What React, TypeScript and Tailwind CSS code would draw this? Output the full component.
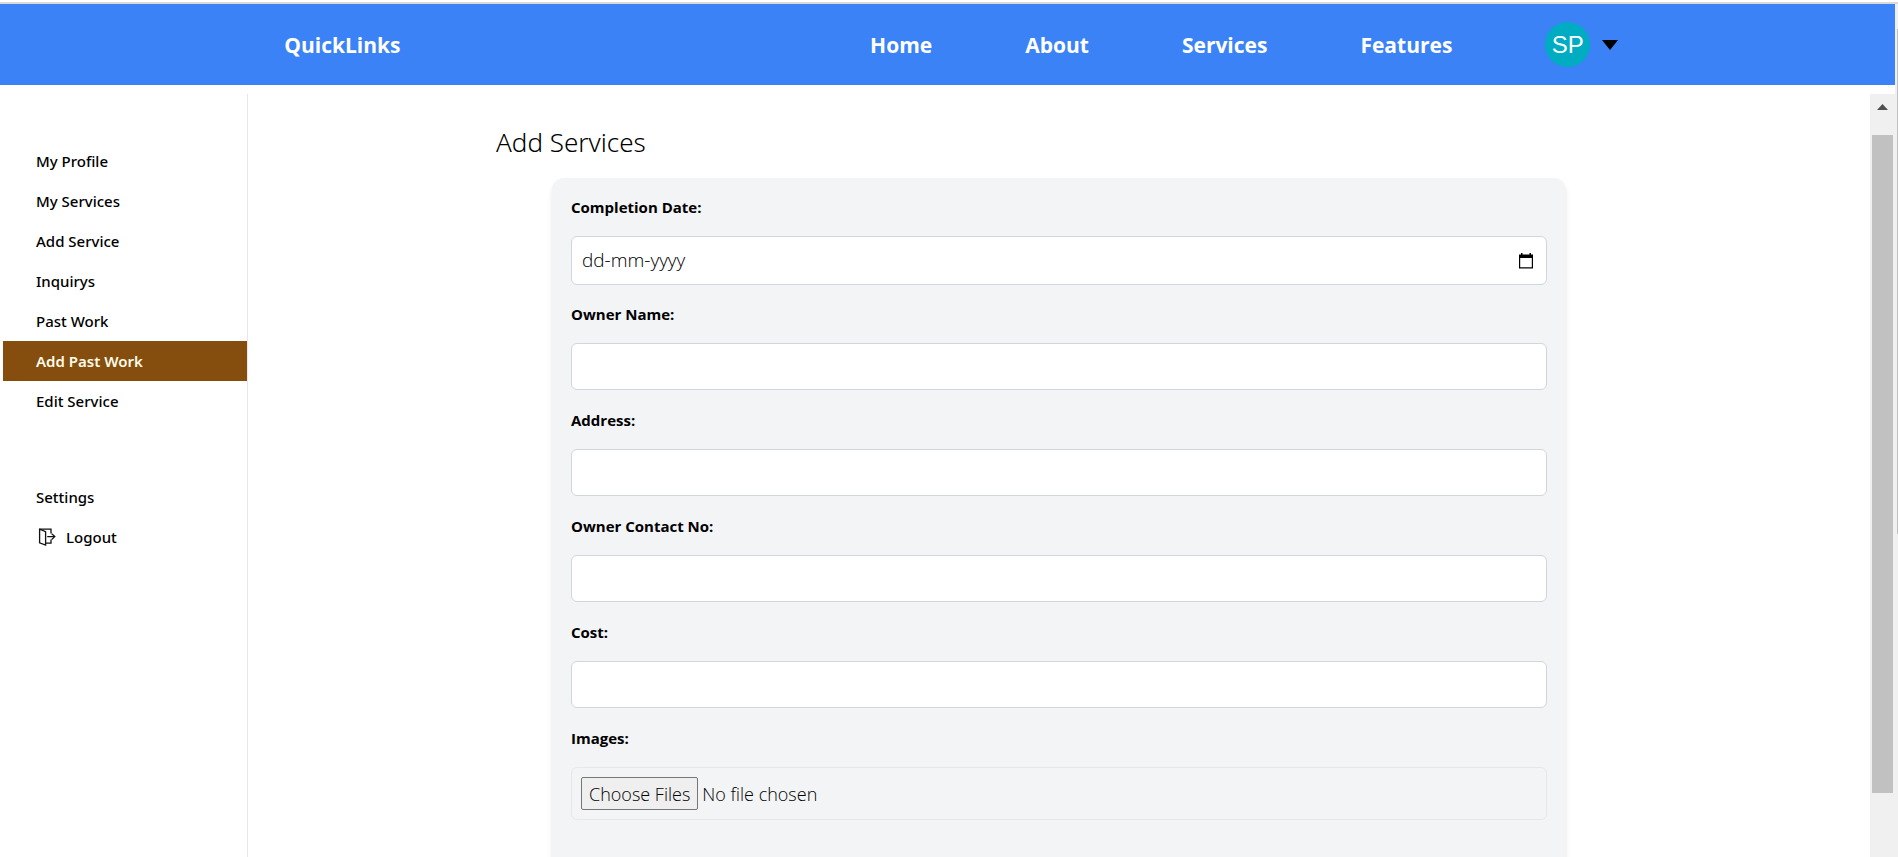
import React from "react";

const navLinks = ["Home", "About", "Services", "Features"];
const menuItems = [
  "My Profile",
  "My Services",
  "Add Service",
  "Inquirys",
  "Past Work",
  "Add Past Work",
  "Edit Service",
];
const textFields = [
  { id: "ownerName", label: "Owner Name:" },
  { id: "address", label: "Address:" },
  { id: "contact", label: "Owner Contact No:" },
  { id: "cost", label: "Cost:" },
];

const labelClass = "mb-[17px] block text-[15px] leading-6 font-bold text-black";

function LogoutIcon() {
  return (
    <svg
      width="18"
      height="18"
      viewBox="0 0 18 18"
      fill="none"
      stroke="#111"
      strokeWidth="1.3"
      aria-hidden="true"
    >
      <path d="M1.6 1.2 H13 V5.6 M13 11.5 V15.2 H8" />
      <path d="M1.6 1.2 V14.9 L7.6 17 V3.6 Z" />
      <path d="M9.2 8.6 H16.4 M13.6 5.6 L16.8 8.6 L13.6 11.6" />
    </svg>
  );
}

function CalendarIcon() {
  return (
    <svg width="14" height="16" viewBox="0 0 14 16" aria-hidden="true">
      <path
        fill="#000"
        fillRule="evenodd"
        d="M0 1.5H2V0H3.5V1.5H10.5V0H12V1.5H14V15.5H0ZM1.2 5H12.8V14.3H1.2Z"
      />
    </svg>
  );
}

function Header() {
  return (
    <header className="flex h-[81px] shrink-0 items-center justify-between bg-[#3b82f6] pr-[14.6%] pl-[15%] text-[21px] leading-8 font-bold text-white">
      <a href="#home">QuickLinks</a>
      <nav className="flex items-center gap-[93px]">
        {navLinks.map((name) => (
          <a key={name} href={"#" + name.toLowerCase()}>
            {name}
          </a>
        ))}
        <button type="button" aria-label="Account menu" className="flex items-center gap-3">
          <span className="flex size-[45px] items-center justify-center rounded-full bg-[#00acc1] font-['Liberation_Sans',sans-serif] text-2xl font-normal">
            SP
          </span>
          <svg width="16" height="10" viewBox="0 0 16 10" aria-hidden="true">
            <path d="M0 0H16L8 10Z" fill="#000" />
          </svg>
        </button>
      </nav>
    </header>
  );
}

function Sidebar() {
  return (
    <aside className="w-[248px] shrink-0 border-r border-gray-200 pt-[47px] pl-[3px] font-['Noto_Sans',sans-serif] text-[15px] font-medium text-black">
      <nav>
        <ul>
          {menuItems.map((item) => (
            <li key={item}>
              <a
                href="#menu"
                className={
                  item === "Add Past Work"
                    ? "flex h-10 items-center bg-[#854d0e] pl-[33px] font-semibold text-yellow-50"
                    : "flex h-10 items-center pl-[33px]"
                }
              >
                {item}
              </a>
            </li>
          ))}
        </ul>
        <ul className="mt-14">
          <li>
            <a href="#settings" className="flex h-10 items-center pl-[33px]">
              Settings
            </a>
          </li>
          <li>
            <a href="#logout" className="flex h-10 items-center gap-[10px] pl-[35px]">
              <LogoutIcon />
              Logout
            </a>
          </li>
        </ul>
      </nav>
    </aside>
  );
}

function WorkForm() {
  return (
    <form className="mx-auto mt-5 max-w-[1014px] rounded-xl bg-gray-100 px-[19px] pt-[17px] pb-20 shadow-md">
      <label htmlFor="date" className={labelClass}>
        Completion Date:
      </label>
      <div className="mb-[17px] flex h-[49px] items-center rounded-md border border-gray-300 bg-white pr-[13px] pl-[10px]">
        <input
          id="date"
          type="text"
          placeholder="dd-mm-yyyy"
          className="min-w-0 flex-1 text-[19px] font-light outline-none placeholder:text-black"
        />
        <button type="button" aria-label="Pick a date">
          <CalendarIcon />
        </button>
      </div>
      {textFields.map((field) => (
        <div key={field.id} className="mb-[18px]">
          <label htmlFor={field.id} className={labelClass}>
            {field.label}
          </label>
          <input
            id={field.id}
            type="text"
            className="block h-[47px] w-full rounded-md border border-gray-300 bg-white px-[10px] text-lg"
          />
        </div>
      ))}
      <label htmlFor="images" className={labelClass}>
        Images:
      </label>
      <input
        id="images"
        type="file"
        multiple
        className="block h-[53px] w-full rounded-md border border-gray-200 p-[9px] text-lg leading-[33px] font-light text-black file:mr-1 file:h-[33px] file:rounded-xs file:border file:border-solid file:border-[#767676] file:bg-[#efefef] file:px-[7px] file:leading-[30px]"
      />
    </form>
  );
}

export default function App() {
  return (
    <div className="flex h-screen overflow-hidden bg-white pt-[2px] font-['Open_Sans',sans-serif]">
      <div className="flex min-w-0 flex-1 flex-col border-t-2 border-[#d9d9d9]">
        <Header />
        <div className="mt-[9px] flex min-h-0 flex-1">
          <Sidebar />
          <main className="min-w-0 flex-1 overflow-hidden pt-8">
            <div className="mx-auto max-w-[1126px]">
              <h1 className="font-['Noto_Sans',sans-serif] text-[26px] leading-8 font-light text-black">
                Add Services
              </h1>
              <WorkForm />
            </div>
          </main>
          <div className="flex w-[25px] shrink-0 flex-col items-center bg-[#f0f0f0]">
            <svg width="11" height="6" viewBox="0 0 11 6" className="mt-[10px] mb-[25px] shrink-0" aria-hidden="true">
              <path d="M0 6H11L5.5 0Z" fill="#505050" />
            </svg>
            <div className="h-[86.3%] w-[21px] bg-[#c1c1c1]" />
          </div>
        </div>
      </div>
      <div className="w-[3px] shrink-0 border-t-2 border-[#d9d9d9] bg-[#f0f0f0] pt-[25px] pl-[2px]">
        <div className="h-[61%] bg-[#c1c1c1]" />
      </div>
    </div>
  );
}
